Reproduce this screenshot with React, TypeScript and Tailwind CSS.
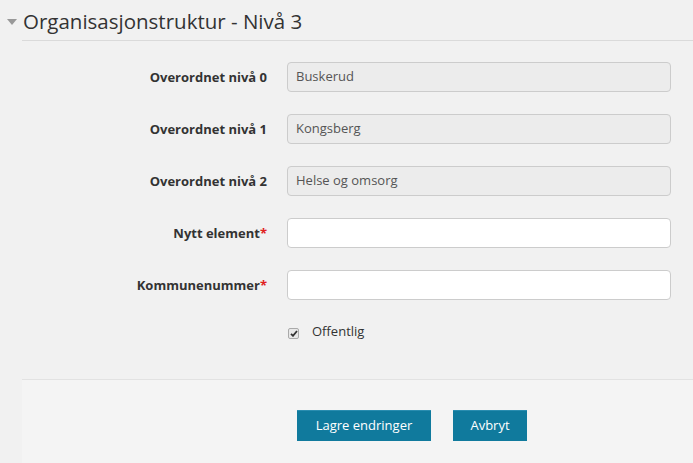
import React from "react";

const font = { fontFamily: '"Open Sans", "Noto Sans", sans-serif' };

function Row({ label, required, value, readOnly }: { label: string; required?: boolean; value?: string; readOnly?: boolean }) {
  return (
    <div className="flex items-center h-[30px]">
      <div className="w-[267px] pr-0 text-right text-[13px] font-bold text-[#333] pt-[2px]">
        {label}
        {required && <span className="text-[#e02020]">*</span>}
      </div>
      <div
        className={`ml-[20px] w-[384px] h-[30px] rounded-[4px] border border-[#cccccc] flex items-center px-[8px] text-[13px] text-[#555] ${
          readOnly ? "bg-[#ececec]" : "bg-white"
        }`}
      >
        {value}
      </div>
    </div>
  );
}

export default function App() {
  return (
    <div className="w-[693px] h-[463px] bg-[#f1f1f1] overflow-hidden" style={font}>
      <div className="flex items-center pt-[3px] h-[40px]">
        <div className="w-[23px] flex justify-end pr-[6px]">
          <div className="w-0 h-0 border-l-[5px] border-r-[5px] border-t-[6px] border-l-transparent border-r-transparent border-t-[#999]" />
        </div>
        <div className="text-[20.5px] text-[#333] leading-none">Organisasjonstruktur - Nivå 3</div>
      </div>
      <div className="ml-[22px] border-t border-[#dadada]" />
      <div className="flex flex-col gap-[22px] pt-[21px]">
        <Row label="Overordnet nivå 0" value="Buskerud" readOnly />
        <Row label="Overordnet nivå 1" value="Kongsberg" readOnly />
        <Row label="Overordnet nivå 2" value="Helse og omsorg" readOnly />
        <Row label="Nytt element" required />
        <Row label="Kommunenummer" required />
      </div>
      <div className="flex items-center pl-[288px] pt-[26px]">
        <div className="w-[11px] h-[11px] rounded-[2px] border border-[#aaa] bg-[#e8e8e8] flex items-center justify-center">
          <svg width="8" height="7" viewBox="0 0 8 7">
            <path d="M1 3.8 L3 5.8 L7 1" stroke="#333" strokeWidth="1.8" fill="none" />
          </svg>
        </div>
        <span className="ml-[13px] text-[13px] text-[#333] -mt-[4px]">Offentlig</span>
      </div>
      <div className="ml-[22px] mt-[37px] border-t border-[#e2e2e2] bg-[#f4f4f4] h-[90px] flex pl-[275px] pt-[30px] gap-[22px]">
        <button className="h-[31px] w-[134px] bg-[#107a9d] text-white text-[13px] border-t border-[#2a8db0]">Lagre endringer</button>
        <button className="h-[31px] w-[74px] bg-[#107a9d] text-white text-[13px] border-t border-[#2a8db0]">Avbryt</button>
      </div>
    </div>
  );
}
